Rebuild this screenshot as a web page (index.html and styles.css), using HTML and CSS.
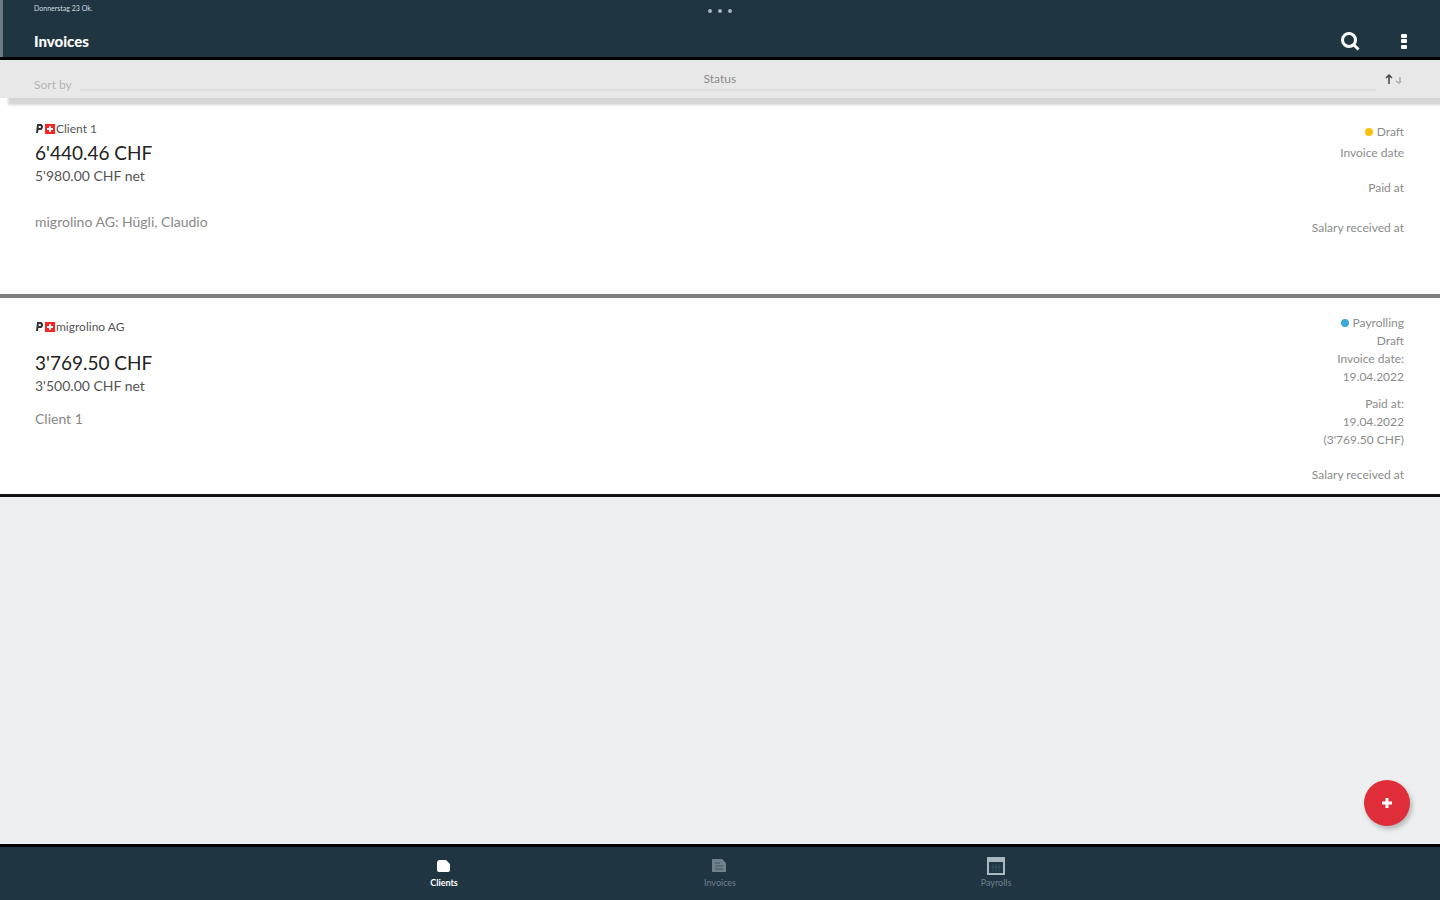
FILE: index.html
```html
<!doctype html>
<html lang="en">

<head>
  <meta charset="UTF-8" />
  <meta name="viewport" content="width=device-width, initial-scale=1" />
  <title>Invoices</title>
  <link rel="stylesheet" href="styles.css">
</head>

<body>
  <header class="app-header">
    <div class="status-row">
      <span class="date">Donnerstag 23 Ok.</span>
      <span class="dots"><i></i><i></i><i></i></span>
      <span></span>
    </div>
    <div class="title-row">
      <h1>Invoices</h1>
      <div class="actions">
        <button type="button" aria-label="Search">
          <svg width="20" height="20" viewBox="0 0 20 20" fill="none" stroke="#fff" stroke-width="3">
            <circle cx="9" cy="9" r="6.5" />
            <path d="M13.500 13.500L18.500 18.500" />
          </svg>
        </button>
        <button type="button" aria-label="More">
          <svg width="20" height="20" viewBox="0 0 20 20" fill="#fff">
            <rect x="7" y="3" width="6" height="4" rx="1" />
            <rect x="7" y="8" width="6" height="4" rx="1" />
            <rect x="7" y="14" width="6" height="4" rx="1" />
          </svg>
        </button>
      </div>
    </div>
  </header>

  <div class="sort-bar">
    <label for="sort">Sort by</label>
    <select id="sort">
      <option>Status</option>
    </select>
    <button type="button" aria-label="Sort direction">
      <svg width="20" height="12" viewBox="0 0 20 12" fill="none">
        <path d="M5 11V2M2 5L5 2L8 5" stroke="#444" stroke-width="1.500" />
        <path d="M16 4V10M12 8L15 10L17 8" stroke="#aaa" stroke-width="1.500" />
      </svg>
    </button>
  </div>

  <main>
    <article class="invoice">
      <div class="info">
        <h2>
          <svg width="20" height="12" viewBox="0 0 20 12">
            <path d="M2 10L3 2H6Q8 4 6 6H3" fill="none" stroke="#333" stroke-width="2" />
            <rect x="10" y="1" width="10" height="10" fill="#f22" />
            <path d="M15 3V9M12 6H18" stroke="#fff" stroke-width="2" />
          </svg>
          Client 1
        </h2>
        <p class="amount">6'440.46 CHF</p>
        <p class="net">5'980.00 CHF net</p>
        <p class="party far">migrolino AG: Hügli, Claudio</p>
      </div>
      <div class="meta">
        <p><span class="dot draft"></span>Draft</p>
        <p class="tight">Invoice date</p>
        <p class="spaced">Paid at</p>
        <p class="wide">Salary received at</p>
      </div>
    </article>

    <article class="invoice last">
      <div class="info">
        <h2 class="tall">
          <svg width="20" height="12" viewBox="0 0 20 12">
            <path d="M2 10L3 2H6Q8 4 6 6H3" fill="none" stroke="#333" stroke-width="2" />
            <rect x="10" y="1" width="10" height="10" fill="#f22" />
            <path d="M15 3V9M12 6H18" stroke="#fff" stroke-width="2" />
          </svg>
          migrolino AG
        </h2>
        <p class="amount">3'769.50 CHF</p>
        <p class="net">3'500.00 CHF net</p>
        <p class="party">Client 1</p>
      </div>
      <div class="meta">
        <p><span class="dot payroll"></span>Payrolling</p>
        <p>Draft</p>
        <p>Invoice date:</p>
        <p>19.04.2022</p>
        <p class="near">Paid at:</p>
        <p>19.04.2022</p>
        <p>(3'769.50 CHF)</p>
        <p class="spaced">Salary received at</p>
      </div>
    </article>
  </main>

  <button type="button" class="add" aria-label="Add invoice">
    <svg width="12" height="12" viewBox="0 0 12 12" stroke="#fff" stroke-width="3">
      <path d="M6 1V11M1 6H11" />
    </svg>
  </button>

  <nav class="tabs">
    <a href="#clients" class="active">
      <svg width="20" height="20" viewBox="0 0 20 20" fill="currentColor">
        <path d="M3 7Q3 4 6 4H12L16 8V14Q16 16 14 16H5Q3 16 3 14Z" />
      </svg>
      Clients
    </a>
    <a href="#invoices">
      <svg width="20" height="20" viewBox="0 0 20 20" fill="currentColor">
        <path d="M2 3H12L16 7V16H2Z" />
        <path d="M5 7H10M5 10H13M5 13H13" stroke="#435662" stroke-width="1" />
      </svg>
      Invoices
    </a>
    <a href="#payrolls" class="light">
      <svg width="20" height="20" viewBox="0 0 20 20" fill="none" stroke="currentColor">
        <rect x="2" y="2" width="16" height="16" stroke-width="2" />
        <path d="M2 4H18" stroke-width="4" />
        <path d="M7 8V16M10 8V16M13 8V16M5 11H15" stroke="#34505e" stroke-width="1" />
      </svg>
      Payrolls
    </a>
  </nav>
</body>

</html>
```
FILE: styles.css
```css
* {
  box-sizing: border-box;
}

body {
  font-family: Lato, sans-serif;
  background: #eeeff0;
  color: #222;
  display: flex;
  flex-direction: column;
  min-height: 100vh;
  margin: 0;
}

h1,
h2,
p {
  margin: 0;
}

button {
  display: flex;
  padding: 0;
  border: none;
  background: none;
  cursor: pointer;
}

.app-header {
  background: #1f3541;
  border-bottom: 3px solid #000;
  box-shadow: inset 3px 0 #6c7b83;
  padding: 0 26px 5px 34px;
  color: #fff;
}

.status-row {
  display: grid;
  grid-template-columns: 1fr auto 1fr;
  align-items: center;
  height: 21px;
  padding-right: 8px;
}

.date {
  font-size: 7px;
  line-height: 16px;
  align-self: start;
  color: #d5dce0;
}

.dots {
  display: flex;
  gap: 6px;
}

.dots i {
  width: 4px;
  height: 4px;
  border-radius: 50%;
  background: #a5b5bf;
}

.title-row {
  display: flex;
  justify-content: space-between;
  align-items: center;
  height: 31px;
  padding-top: 9px;
}

.title-row h1 {
  font-size: 15px;
  line-height: 20px;
  font-weight: 900;
}

.actions {
  display: flex;
  gap: 34px;
}

.sort-bar {
  display: flex;
  align-items: center;
  gap: 8px;
  height: 38px;
  padding: 0 36px 0 34px;
  background: #e8e8e8;
  box-shadow: 8px 7px 2px #d6d6d6;
  z-index: 1;
}

.sort-bar label {
  padding-top: 10px;
  font-size: 12px;
  color: #b5b5b5;
}

.sort-bar select {
  flex: 1;
  height: 24px;
  padding-right: 16px;
  border: none;
  border-bottom: 2px solid #dedede;
  border-radius: 0;
  background: none;
  appearance: none;
  font-family: inherit;
  font-size: 12px;
  color: #8c8c8c;
  text-align-last: center;
}

.invoice {
  display: flex;
  justify-content: space-between;
  min-height: 200px;
  padding: 25px 36px 9px 35px;
  background: #fff;
  border-bottom: 4px solid #808080;
}

.invoice.last {
  min-height: 199px;
  padding-top: 16px;
  border-bottom: 3px solid #111;
}

.info {
  display: flex;
  flex-direction: column;
}

.info h2 {
  display: flex;
  align-items: center;
  gap: 1px;
  margin-bottom: 6px;
  font-size: 12px;
  line-height: 12px;
  font-weight: 400;
  color: #555;
}

.info h2.tall {
  margin: 7px 0 18px;
}

.amount {
  font-size: 19px;
  line-height: 24px;
}

.net {
  font-size: 14px;
  line-height: 22px;
  color: #555;
}

.party {
  margin-top: 11px;
  font-size: 14px;
  line-height: 22px;
  color: #888;
}

.party.far {
  margin-top: 24px;
}

.meta {
  font-size: 12px;
  line-height: 18px;
  color: #8c8c8c;
  text-align: right;
}

.meta .tight {
  margin-top: 3px;
}

.meta .near {
  margin-top: 9px;
}

.meta .spaced {
  margin-top: 17px;
}

.meta .wide {
  margin-top: 22px;
}

.dot {
  display: inline-block;
  width: 8px;
  height: 8px;
  margin-right: 4px;
  border-radius: 50%;
}

.draft {
  background: #fdc010;
}

.payroll {
  background: #3ba9dc;
}

.add {
  position: fixed;
  right: 30px;
  bottom: 74px;
  width: 46px;
  height: 46px;
  align-items: center;
  justify-content: center;
  border-radius: 50%;
  background: #e02d3a;
  box-shadow: 2px 3px 5px rgba(0, 0, 0, 0.25);
}

.tabs {
  display: flex;
  justify-content: center;
  margin-top: auto;
  height: 56px;
  padding-top: 9px;
  background: #1f3541;
  border-top: 3px solid #000;
}

.tabs a {
  display: flex;
  flex-direction: column;
  align-items: center;
  width: 276px;
  font-size: 9px;
  line-height: 14px;
  color: #71818b;
  text-decoration: none;
}

.tabs a.active {
  color: #fff;
  font-weight: 700;
}

.tabs a.light svg {
  color: #a9b8c1;
}
```
